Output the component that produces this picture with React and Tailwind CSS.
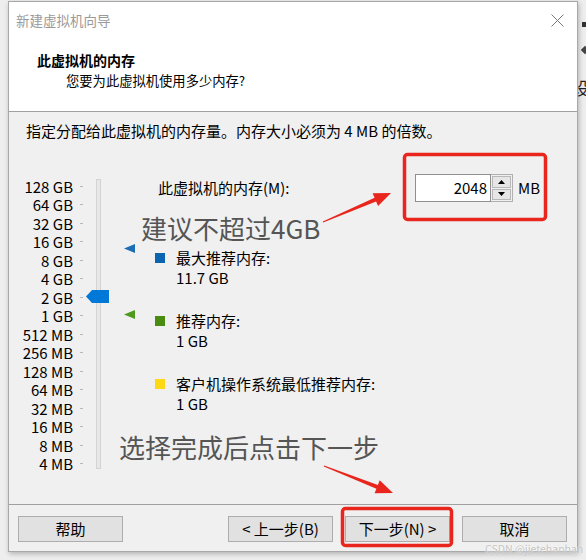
import React from 'react';

const LABELS = [
  '128 GB', '64 GB', '32 GB', '16 GB', '8 GB', '4 GB', '2 GB', '1 GB',
  '512 MB', '256 MB', '128 MB', '64 MB', '32 MB', '16 MB', '8 MB', '4 MB',
];

// tapered annotation arrow: thin tail, wider neck, triangular head
function arrowPoints(tail, tip, headLen, headHalf, tailHalf, neckHalf) {
  const dx = tip[0] - tail[0];
  const dy = tip[1] - tail[1];
  const len = Math.hypot(dx, dy);
  const ux = dx / len;
  const uy = dy / len;
  const nx = -uy;
  const ny = ux;
  const bx = tip[0] - ux * headLen;
  const by = tip[1] - uy * headLen;
  const p = (x, y) => `${x.toFixed(1)},${y.toFixed(1)}`;
  return [
    p(tail[0] + nx * tailHalf, tail[1] + ny * tailHalf),
    p(bx + nx * neckHalf, by + ny * neckHalf),
    p(bx + nx * headHalf, by + ny * headHalf),
    p(tip[0], tip[1]),
    p(bx - nx * headHalf, by - ny * headHalf),
    p(bx - nx * neckHalf, by - ny * neckHalf),
    p(tail[0] - nx * tailHalf, tail[1] - ny * tailHalf),
  ].join(' ');
}

function Legend({ color, label, value, className }) {
  return (
    <div className={`flex ${className}`}>
      <span className={`mt-[5px] h-[10px] w-[10px] shrink-0 ${color}`} />
      <div className="ml-[11px] whitespace-nowrap leading-[20px]">
        <div>{label}</div>
        <div>{value}</div>
      </div>
    </div>
  );
}

function Button({ children }) {
  return (
    <div className="flex h-[26px] w-[105px] items-center justify-center whitespace-nowrap border border-[#adadad] bg-[#e1e1e1] text-[15px] text-black">
      {children}
    </div>
  );
}

export default function App() {
  return (
    <div className="relative h-[560px] w-[586px] overflow-hidden bg-[#eeeeee] font-['Noto_Sans_CJK_SC','Noto_Sans',sans-serif] text-[#1a1a1a]">
      {/* bits of the window behind the dialog */}
      <span className="absolute left-[582px] top-[22px] h-[5px] w-[4px] bg-[#333]" />
      <span className="absolute left-[582px] top-[47px] h-[6px] w-[6px] rotate-45 bg-[#444]" />
      <span className="absolute left-[572px] top-[78px] text-[17px] leading-[20px] text-[#222]">设</span>

      <div className="relative z-10 ml-[8px] mt-[1px] flex h-[551px] w-[570px] flex-col border border-[#a8a8a8] bg-[#f0f0f0] shadow-[1px_2px_5px_rgba(0,0,0,0.25)]">
        {/* title bar + header */}
        <div className="h-[109px] bg-white">
          <div className="flex h-[36px] items-center justify-between pl-[7px] pr-[13px]">
            <span className="text-[13.5px] text-[#9a9a9a]">新建虚拟机向导</span>
            <svg width="13" height="13" viewBox="0 0 13 13">
              <path d="M0.5 0.5 L12.5 12.5 M12.5 0.5 L0.5 12.5" stroke="#7a7a7a" strokeWidth="1" fill="none" />
            </svg>
          </div>
          <div className="pl-[28px] pt-[12px] text-[14px] font-bold leading-[20px] text-black">此虚拟机的内存</div>
          <div className="pl-[57px] text-[13.3px] leading-[22px] text-black">您要为此虚拟机使用多少内存?</div>
        </div>

        {/* body */}
        <div className="flex-1 border-t border-[#a0a0a0] pl-[17px] pt-[9px] text-[15px] text-black">
          <div className="whitespace-nowrap leading-[20px]">指定分配给此虚拟机的内存量。内存大小必须为 4 MB 的倍数。</div>

          <div className="mt-[31px] flex">
            {/* slider */}
            <div className="relative -ml-[10px] flex">
              <div className="pt-[5px]">
                {LABELS.map((l) => (
                  <div key={l} className="flex h-[18.5px] items-center">
                    <span className="w-[57px] whitespace-nowrap text-right leading-none">{l}</span>
                    <span className="ml-[7px] h-px w-[3px] bg-[#b8b8b8]" />
                  </div>
                ))}
              </div>
              <div className="ml-[13px] mt-[7px] h-[290px] w-[5px] border border-[#d4d4d4] bg-[#e7e7e7]" />

              <svg className="absolute left-[70px] top-[118px]" width="23" height="13" viewBox="0 0 23 13">
                <polygon points="0,6.5 6,0 23,0 23,13 6,13" fill="#0078d7" />
              </svg>
              <svg className="absolute left-[108px] top-[71px]" width="11" height="11" viewBox="0 0 11 11">
                <polygon points="0,5.5 11,1 11,10" fill="#1c6db4" />
              </svg>
              <svg className="absolute left-[108px] top-[137px]" width="11" height="11" viewBox="0 0 11 11">
                <polygon points="0,5.5 11,1 11,10" fill="#4f9a1e" />
              </svg>
            </div>

            {/* right column */}
            <div className="ml-[54px]">
              <div className="mt-[2px] flex h-[28px] items-center">
                <span className="w-[260px] whitespace-nowrap pl-[3px]">此虚拟机的内存(M):</span>
                <div className="flex h-[28px] w-[76px] items-center justify-end border border-[#8f8f8f] bg-white pr-[3px]">2048</div>
                <div className="flex h-[28px] w-[22px] flex-col border border-l-0 border-[#b0b0b0] bg-[#f0f0f0] p-px">
                  <div className="flex flex-1 items-center justify-center border border-[#b8b8b8] bg-[#e6e6e6]">
                    <svg width="7" height="4" viewBox="0 0 7 4"><polygon points="0,4 3.5,0 7,4" fill="#000" /></svg>
                  </div>
                  <div className="mt-px flex flex-1 items-center justify-center border border-[#b8b8b8] bg-[#e6e6e6]">
                    <svg width="7" height="4" viewBox="0 0 7 4"><polygon points="0,0 3.5,4 7,0" fill="#000" /></svg>
                  </div>
                </div>
                <span className="ml-[5px]">MB</span>
              </div>

              <Legend className="mt-[46px]" color="bg-[#0a64b0]" label="最大推荐内存:" value="11.7 GB" />
              <Legend className="mt-[23px]" color="bg-[#4a8c12]" label="推荐内存:" value="1 GB" />
              <Legend className="mt-[23px]" color="bg-[#ffd814]" label="客户机操作系统最低推荐内存:" value="1 GB" />
            </div>
          </div>
        </div>

        {/* footer */}
        <div className="flex h-[47px] items-start border-t border-[#a0a0a0] pl-[9px] pr-[10px] pt-[11px]">
          <Button>帮助</Button>
          <div className="ml-auto flex gap-[12px]">
            <Button>&lt; 上一步(B)</Button>
            <Button>下一步(N) &gt;</Button>
            <Button>取消</Button>
          </div>
        </div>
      </div>

      {/* annotations drawn over the screenshot */}
      <div className="absolute left-[141px] top-[212px] z-20 whitespace-nowrap text-[26px] leading-[32px] text-[#555]">建议不超过4GB</div>
      <div className="absolute left-[119px] top-[431px] z-20 whitespace-nowrap text-[26px] leading-[32px] text-[#555]">选择完成后点击下一步</div>
      <svg className="pointer-events-none absolute inset-0 z-20" width="586" height="560" viewBox="0 0 586 560">
        <rect x="404.5" y="154.5" width="141" height="65" rx="3" fill="none" stroke="#e8261d" strokeWidth="3.5" />
        <rect x="342.5" y="508.5" width="109" height="37" rx="3" fill="none" stroke="#e8261d" strokeWidth="3.5" />
        <polygon points={arrowPoints([323, 222], [391, 193], 17, 7, 0.6, 2)} fill="#e8261d" />
        <polygon points={arrowPoints([324, 466], [393, 493], 17, 7, 0.6, 2)} fill="#e8261d" />
      </svg>
      <div className="absolute left-[485px] top-[542px] z-20 whitespace-nowrap text-[10.5px] leading-[14px] text-[#c4c4c4] [text-shadow:0_0_2px_#ffffff]">CSDN @jietehanhan</div>
    </div>
  );
}
